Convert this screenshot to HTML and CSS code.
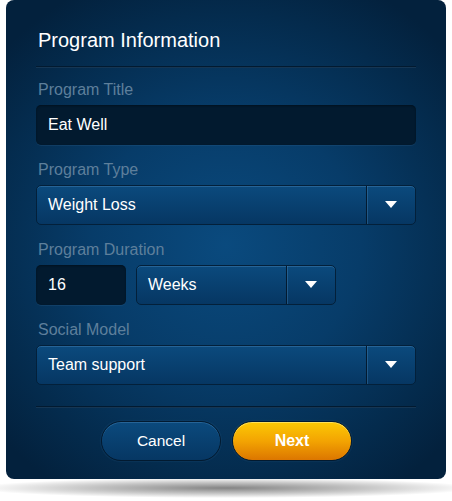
FILE: index.html
```html
<!DOCTYPE html>
<html>
<head>
<meta charset="utf-8">
<link rel="stylesheet" href="styles.css">
</head>
<body>
<div class="stage">
  <div class="panel">
    <h1 class="title">Program Information</h1>
    <div class="rule"></div>
    <div class="field">
      <div class="label">Program Title</div>
      <div class="input wide">Eat Well</div>
    </div>
    <div class="field">
      <div class="label">Program Type</div>
      <div class="select wide">
        <span class="value">Weight Loss</span>
        <span class="arrow"><svg width="12" height="7" viewBox="0 0 12 7"><path d="M0 0H12L6 7Z" fill="#fff"/></svg></span>
      </div>
    </div>
    <div class="field">
      <div class="label">Program Duration</div>
      <div class="row">
        <div class="input short">16</div>
        <div class="select mid">
          <span class="value">Weeks</span>
          <span class="arrow"><svg width="12" height="7" viewBox="0 0 12 7"><path d="M0 0H12L6 7Z" fill="#fff"/></svg></span>
        </div>
      </div>
    </div>
    <div class="field">
      <div class="label">Social Model</div>
      <div class="select wide">
        <span class="value">Team support</span>
        <span class="arrow"><svg width="12" height="7" viewBox="0 0 12 7"><path d="M0 0H12L6 7Z" fill="#fff"/></svg></span>
      </div>
    </div>
    <div class="rule bottom"></div>
    <div class="actions">
      <button class="btn cancel">Cancel</button>
      <button class="btn next">Next</button>
    </div>
  </div>
  <div class="shadow"></div>
</div>
</body>
</html>
```
FILE: styles.css
```css
html, body {
  margin: 0;
  padding: 0;
  background: #ffffff;
}
body {
  font-family: "Liberation Sans", Arial, sans-serif;
}
.stage {
  width: 452px;
  height: 501px;
  position: relative;
  overflow: hidden;
}
.panel {
  position: relative;
  z-index: 1;
  margin-left: 6px;
  width: 440px;
  height: 479px;
  box-sizing: border-box;
  padding: 0 30px;
  border-radius: 8px;
  background: radial-gradient(ellipse 300px 290px at 220px 245px, #0a4a7e 0%, #073c69 45%, #042b4d 80%, #03213d 100%);
  display: flex;
  flex-direction: column;
}
.title {
  margin: 0;
  padding: 29px 0 0 2px;
  height: 37px;
  font-size: 20px;
  font-weight: normal;
  color: #ffffff;
  line-height: 22px;
}
.rule {
  height: 1px;
  background: #021a30;
  border-bottom: 1px solid rgba(60, 110, 150, 0.35);
}
.field {
  display: flex;
  flex-direction: column;
}
.label {
  font-size: 16px;
  line-height: 18px;
  color: #5e7f9b;
  padding: 16px 0 0 2px;
  height: 24px;
  box-sizing: content-box;
}
.rule + .field .label {
  padding-top: 13px;
}
.input {
  height: 40px;
  box-sizing: border-box;
  background: #021a2f;
  border-radius: 5px;
  color: #ffffff;
  font-size: 16px;
  line-height: 40px;
  padding-left: 12px;
  box-shadow: inset 0 1px 2px rgba(0,0,0,0.35), 0 1px 0 rgba(80,130,170,0.15);
}
.wide { width: 380px; }
.short { width: 90px; }
.mid { width: 200px; }
.row {
  display: flex;
  gap: 10px;
}
.select {
  height: 40px;
  box-sizing: border-box;
  border: 1px solid #03203a;
  border-radius: 5px;
  background: linear-gradient(#0b4a7d, #063763);
  box-shadow: inset 0 1px 0 rgba(90,150,200,0.35);
  display: flex;
  color: #ffffff;
  font-size: 16px;
}
.select .value {
  flex: 1;
  line-height: 38px;
  padding-left: 11px;
  border-right: 1px solid #021a30;
  box-shadow: 1px 0 0 rgba(80,140,190,0.35);
}
.select .arrow {
  width: 48px;
  display: flex;
  align-items: center;
  justify-content: center;
}
.select .arrow svg {
  display: block;
  margin-top: -1px;
}
.rule.bottom {
  margin-top: 21px;
}
.actions {
  display: flex;
  justify-content: center;
  gap: 11px;
  padding-top: 13px;
  padding-left: 1px;
}
.btn {
  width: 120px;
  height: 40px;
  border-radius: 20px;
  font-family: "Liberation Sans", Arial, sans-serif;
  font-size: 15.5px;
  color: #ffffff;
  border: 1px solid #021a30;
  padding: 0;
}
.cancel {
  background: linear-gradient(#0b4a7d, #063763);
  box-shadow: inset 0 1px 0 rgba(90,150,200,0.35), 0 0 2px rgba(100,160,210,0.25);
}
.next {
  font-weight: bold;
  font-size: 16px;
  background: linear-gradient(#fcc904, #f3a402 50%, #dc7600);
  box-shadow: inset 0 1px 0 rgba(255,240,150,0.6), 0 0 2px rgba(100,160,210,0.25);
}
.shadow {
  position: absolute;
  left: 0;
  top: 478px;
  width: 452px;
  height: 22px;
  background: radial-gradient(ellipse 250px 10px at 226px 10px, rgba(110,110,110,0.85), rgba(150,150,150,0.55) 55%, rgba(255,255,255,0) 100%);
}
```
